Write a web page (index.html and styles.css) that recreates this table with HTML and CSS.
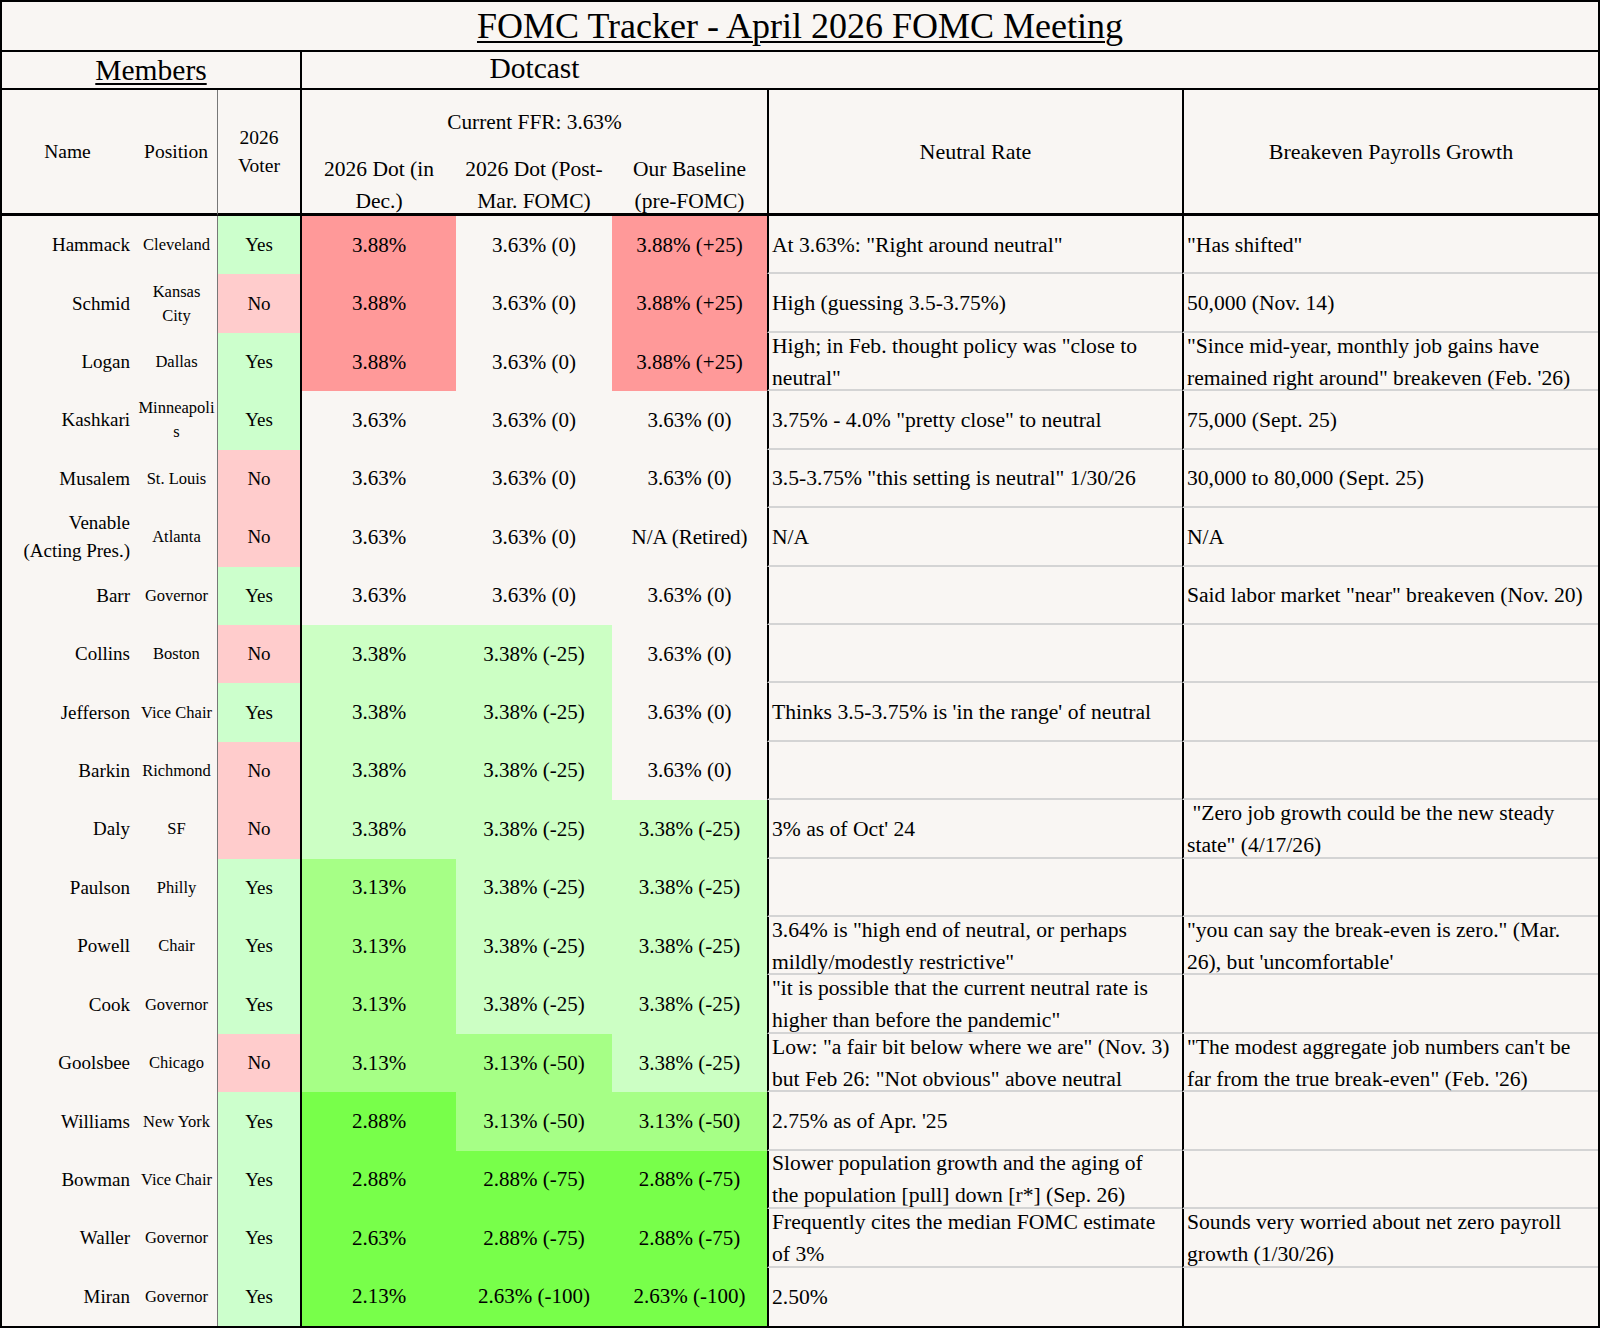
FILE: index.html
```html
<!DOCTYPE html>
<html lang="en">
<head>
<meta charset="utf-8">
<title>FOMC Tracker - April 2026 FOMC Meeting</title>
<link rel="stylesheet" href="styles.css">
</head>
<body>
<div class="sheet">
  <div class="title"><span class="u">FOMC Tracker - April 2026 FOMC Meeting</span></div>

  <div class="sec sec-members"><span class="u">Members</span></div>
  <div class="sec sec-dot">Dotcast</div>
  <div class="sec sec-rest"></div>

  <div class="hd hd-name">Name</div>
  <div class="hd hd-pos">Position</div>
  <div class="hd hd-vote">2026 Voter</div>
  <div class="hd hd-ffr">Current FFR: 3.63%</div>
  <div class="hd hd-sub hd-sub1">2026 Dot (in Dec.)</div>
  <div class="hd hd-sub">2026 Dot (Post-Mar. FOMC)</div>
  <div class="hd hd-sub">Our Baseline (pre-FOMC)</div>
  <div class="hd hd-big hd-neutral">Neutral Rate</div>
  <div class="hd hd-big hd-break">Breakeven Payrolls Growth</div>

  <!-- 1 -->
  <div class="c name">Hammack</div><div class="c pos">Cleveland</div><div class="c vote yes">Yes</div>
  <div class="c dot d1 red">3.88%</div><div class="c dot">3.63% (0)</div><div class="c dot red">3.88% (+25)</div>
  <div class="c note nl">At 3.63%: "Right around neutral"</div><div class="c note br">"Has shifted"</div>
  <!-- 2 -->
  <div class="c name">Schmid</div><div class="c pos">Kansas City</div><div class="c vote no">No</div>
  <div class="c dot d1 red">3.88%</div><div class="c dot">3.63% (0)</div><div class="c dot red">3.88% (+25)</div>
  <div class="c note nl">High (guessing 3.5-3.75%)</div><div class="c note br">50,000 (Nov. 14)</div>
  <!-- 3 -->
  <div class="c name">Logan</div><div class="c pos">Dallas</div><div class="c vote yes">Yes</div>
  <div class="c dot d1 red">3.88%</div><div class="c dot">3.63% (0)</div><div class="c dot red">3.88% (+25)</div>
  <div class="c note nl">High; in Feb. thought policy was "close to neutral"</div><div class="c note br">"Since mid-year, monthly job gains have remained right around" breakeven (Feb. '26)</div>
  <!-- 4 -->
  <div class="c name">Kashkari</div><div class="c pos">Minneapolis</div><div class="c vote yes">Yes</div>
  <div class="c dot d1">3.63%</div><div class="c dot">3.63% (0)</div><div class="c dot">3.63% (0)</div>
  <div class="c note nl">3.75% - 4.0% "pretty close" to neutral</div><div class="c note br">75,000 (Sept. 25)</div>
  <!-- 5 -->
  <div class="c name">Musalem</div><div class="c pos">St. Louis</div><div class="c vote no">No</div>
  <div class="c dot d1">3.63%</div><div class="c dot">3.63% (0)</div><div class="c dot">3.63% (0)</div>
  <div class="c note nl">3.5-3.75% "this setting is neutral" 1/30/26</div><div class="c note br">30,000 to 80,000 (Sept. 25)</div>
  <!-- 6 -->
  <div class="c name">Venable (Acting Pres.)</div><div class="c pos">Atlanta</div><div class="c vote no">No</div>
  <div class="c dot d1">3.63%</div><div class="c dot">3.63% (0)</div><div class="c dot">N/A (Retired)</div>
  <div class="c note nl">N/A</div><div class="c note br">N/A</div>
  <!-- 7 -->
  <div class="c name">Barr</div><div class="c pos">Governor</div><div class="c vote yes">Yes</div>
  <div class="c dot d1">3.63%</div><div class="c dot">3.63% (0)</div><div class="c dot">3.63% (0)</div>
  <div class="c note nl"></div><div class="c note br">Said labor market "near" breakeven (Nov. 20)</div>
  <!-- 8 -->
  <div class="c name">Collins</div><div class="c pos">Boston</div><div class="c vote no">No</div>
  <div class="c dot d1 lg">3.38%</div><div class="c dot lg">3.38% (-25)</div><div class="c dot">3.63% (0)</div>
  <div class="c note nl"></div><div class="c note br"></div>
  <!-- 9 -->
  <div class="c name">Jefferson</div><div class="c pos">Vice Chair</div><div class="c vote yes">Yes</div>
  <div class="c dot d1 lg">3.38%</div><div class="c dot lg">3.38% (-25)</div><div class="c dot">3.63% (0)</div>
  <div class="c note nl">Thinks 3.5-3.75% is 'in the range' of neutral</div><div class="c note br"></div>
  <!-- 10 -->
  <div class="c name">Barkin</div><div class="c pos">Richmond</div><div class="c vote no">No</div>
  <div class="c dot d1 lg">3.38%</div><div class="c dot lg">3.38% (-25)</div><div class="c dot">3.63% (0)</div>
  <div class="c note nl"></div><div class="c note br"></div>
  <!-- 11 -->
  <div class="c name">Daly</div><div class="c pos">SF</div><div class="c vote no">No</div>
  <div class="c dot d1 lg">3.38%</div><div class="c dot lg">3.38% (-25)</div><div class="c dot lg">3.38% (-25)</div>
  <div class="c note nl">3% as of Oct' 24</div><div class="c note br">&nbsp;"Zero job growth could be the new steady state" (4/17/26)</div>
  <!-- 12 -->
  <div class="c name">Paulson</div><div class="c pos">Philly</div><div class="c vote yes">Yes</div>
  <div class="c dot d1 mg">3.13%</div><div class="c dot lg">3.38% (-25)</div><div class="c dot lg">3.38% (-25)</div>
  <div class="c note nl"></div><div class="c note br"></div>
  <!-- 13 -->
  <div class="c name">Powell</div><div class="c pos">Chair</div><div class="c vote yes">Yes</div>
  <div class="c dot d1 mg">3.13%</div><div class="c dot lg">3.38% (-25)</div><div class="c dot lg">3.38% (-25)</div>
  <div class="c note nl">3.64% is "high end of neutral, or perhaps mildly/modestly restrictive"</div><div class="c note br">"you can say the break-even is zero." (Mar.<br>26), but 'uncomfortable'</div>
  <!-- 14 -->
  <div class="c name">Cook</div><div class="c pos">Governor</div><div class="c vote yes">Yes</div>
  <div class="c dot d1 mg">3.13%</div><div class="c dot lg">3.38% (-25)</div><div class="c dot lg">3.38% (-25)</div>
  <div class="c note nl">"it is possible that the current neutral rate is higher than before the pandemic"</div><div class="c note br"></div>
  <!-- 15 -->
  <div class="c name">Goolsbee</div><div class="c pos">Chicago</div><div class="c vote no">No</div>
  <div class="c dot d1 mg">3.13%</div><div class="c dot mg">3.13% (-50)</div><div class="c dot lg">3.38% (-25)</div>
  <div class="c note nl">Low: "a fair bit below where we are" (Nov. 3) but Feb 26: "Not obvious" above neutral</div><div class="c note br">"The modest aggregate job numbers can't be far from the true break-even" (Feb. '26)</div>
  <!-- 16 -->
  <div class="c name">Williams</div><div class="c pos">New York</div><div class="c vote yes">Yes</div>
  <div class="c dot d1 g">2.88%</div><div class="c dot mg">3.13% (-50)</div><div class="c dot mg">3.13% (-50)</div>
  <div class="c note nl">2.75% as of Apr. '25</div><div class="c note br"></div>
  <!-- 17 -->
  <div class="c name">Bowman</div><div class="c pos">Vice Chair</div><div class="c vote yes">Yes</div>
  <div class="c dot d1 g">2.88%</div><div class="c dot g">2.88% (-75)</div><div class="c dot g">2.88% (-75)</div>
  <div class="c note nl">Slower population growth and the aging of<br>the population [pull] down [r*] (Sep. 26)</div><div class="c note br"></div>
  <!-- 18 -->
  <div class="c name">Waller</div><div class="c pos">Governor</div><div class="c vote yes">Yes</div>
  <div class="c dot d1 g">2.63%</div><div class="c dot g">2.88% (-75)</div><div class="c dot g">2.88% (-75)</div>
  <div class="c note nl">Frequently cites the median FOMC estimate<br>of 3%</div><div class="c note br">Sounds very worried about net zero payroll growth (1/30/26)</div>
  <!-- 19 -->
  <div class="c name">Miran</div><div class="c pos">Governor</div><div class="c vote yes">Yes</div>
  <div class="c dot d1 g">2.13%</div><div class="c dot g">2.63% (-100)</div><div class="c dot g">2.63% (-100)</div>
  <div class="c note nl last">2.50%</div><div class="c note br last"></div>
</div>
</body>
</html>
```

FILE: styles.css
```css
* {
  box-sizing: border-box;
}

body {
  margin: 0;
  background: #ffffff;
}

.sheet {
  width: 1600px;
  height: 1328px;
  border: 2px solid #000;
  background: #f9f6f3;
  color: #000;
  font-family: "Liberation Serif", "Times New Roman", serif;
  display: grid;
  grid-template-columns: 136px 79px 83px 156px 156px 155px 415px 416px;
  grid-template-rows: 50px 38px 62px 64px repeat(19, 1fr);
}

.u {
  text-decoration: underline;
  text-decoration-thickness: 2px;
  text-underline-offset: 3px;
}

/* title */
.title {
  grid-column: 1 / -1;
  border-bottom: 2px solid #000;
  display: flex;
  align-items: center;
  justify-content: center;
  font-size: 36px;
  line-height: 1;
  padding-bottom: 1px;
}

/* section row */
.sec {
  border-bottom: 2px solid #000;
  display: flex;
  align-items: center;
  justify-content: center;
  line-height: 1;
}
.sec-members {
  grid-column: 1 / 4;
  font-size: 29.5px;
  padding-top: 2px;
}
.sec-dot {
  grid-column: 4 / 7;
  border-left: 2px solid #000;
  font-size: 29.5px;
  padding-bottom: 3px;
}
.sec-rest {
  grid-column: 7 / 9;
}

/* header */
.hd {
  display: flex;
  align-items: center;
  justify-content: center;
  text-align: center;
  font-size: 19.5px;
  line-height: 28px;
}
.hd-name,
.hd-pos,
.hd-vote,
.hd-neutral,
.hd-break {
  grid-row: 3 / 5;
  border-bottom: 3px solid #000;
  padding-top: 1px;
}
.hd-name {
  grid-column: 1;
  padding-right: 5px;
}
.hd-pos {
  grid-column: 2;
  padding-right: 3px;
}
.hd-vote {
  grid-column: 3;
  border-left: 1px solid #777;
  padding: 1px 12px 0;
}
.hd-ffr {
  grid-column: 4 / 7;
  grid-row: 3;
  border-left: 2px solid #000;
  font-size: 21.3px;
  padding-top: 1px;
}
.hd-sub {
  grid-row: 4;
  align-items: flex-start;
  border-bottom: 3px solid #000;
  font-size: 21.5px;
  line-height: 32px;
  padding: 1px 4px 0;
  overflow: visible;
}
.hd-sub1 {
  border-left: 2px solid #000;
}
.hd-big {
  font-size: 22px;
}
.hd-neutral {
  grid-column: 7;
  border-left: 2px solid #000;
}
.hd-break {
  grid-column: 8;
  border-left: 2px solid #000;
}

/* data cells */
.c {
  display: flex;
  align-items: center;
  justify-content: center;
  text-align: center;
  min-width: 0;
  min-height: 0;
  overflow: visible;
}
.name {
  justify-content: flex-end;
  text-align: right;
  font-size: 19px;
  line-height: 28px;
  padding: 0 8px 0 18px;
}
.pos {
  font-size: 16.5px;
  line-height: 24px;
  padding-right: 2px;
  overflow-wrap: anywhere;
}
.vote {
  border-left: 1px solid #777;
  font-size: 19px;
}
.yes {
  background: #ccffcc;
}
.no {
  background: #ffcccc;
}
.dot {
  font-size: 21px;
}
.d1 {
  border-left: 2px solid #000;
}
.red {
  background: #ff9999;
}
.lg {
  background: #ccffc4;
}
.mg {
  background: #a6ff86;
}
.g {
  background: #78ff4a;
}
.note {
  justify-content: flex-start;
  text-align: left;
  font-size: 21.6px;
  line-height: 32px;
  padding: 1px 3px 0;
  border-left: 2px solid #000;
  border-bottom: 2px solid #d4d4d4;
}
.note.last {
  border-bottom: 0;
}
```
